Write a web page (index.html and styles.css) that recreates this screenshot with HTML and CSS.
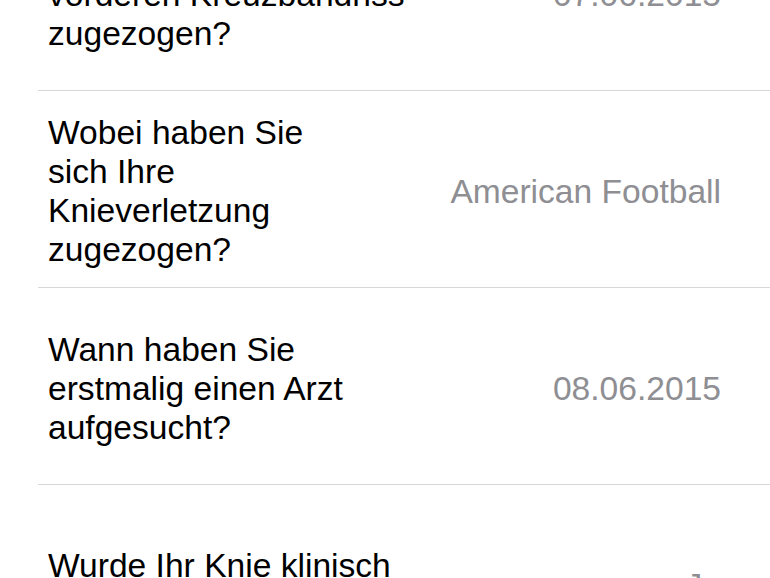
FILE: index.html
```html
<!DOCTYPE html>
<html lang="de">
<head>
  <meta charset="UTF-8" />
  <meta name="viewport" content="width=device-width, initial-scale=1.0"/>
  <title>Knieverletzung – Anamnese</title>
  <link rel="stylesheet" href="styles.css">
</head>
<body>

<div class="list">

  <div class="row">
    <div class="label">Wann haben Sie sich den<br>vorderen Kreuzbandriss<br>zugezogen?</div>
    <div class="value">07.06.2015</div>
  </div>

  <div class="row">
    <div class="label">Wobei haben Sie<br>sich Ihre<br>Knieverletzung<br>zugezogen?</div>
    <div class="value">American Football</div>
  </div>

  <div class="row">
    <div class="label">Wann haben Sie<br>erstmalig einen Arzt<br>aufgesucht?</div>
    <div class="value">08.06.2015</div>
  </div>

  <div class="row">
    <div class="label">Wurde Ihr Knie klinisch<br>untersucht?</div>
    <div class="value">Ja</div>
  </div>

</div>

</body>
</html>
```

FILE: styles.css
```css
body {
  font-family: 'Liberation Sans', Arial, sans-serif;
  background: #ffffff;
  color: #000000;
  margin: 0;
  padding: 0;
  overflow: hidden;
}
.list {
  margin-top: -106px;
  margin-left: 38px;
}
.row {
  display: flex;
  align-items: center;
  justify-content: space-between;
  box-sizing: border-box;
  height: 197px;
  padding: 4px 49px 0 10px;
  border-bottom: 1px solid #d8d8d8;
}
.label {
  font-size: 33.6px;
  line-height: 39px;
}
.value {
  font-size: 33.6px;
  line-height: 39px;
  color: #8e8e93;
  text-align: right;
  white-space: nowrap;
}
```
